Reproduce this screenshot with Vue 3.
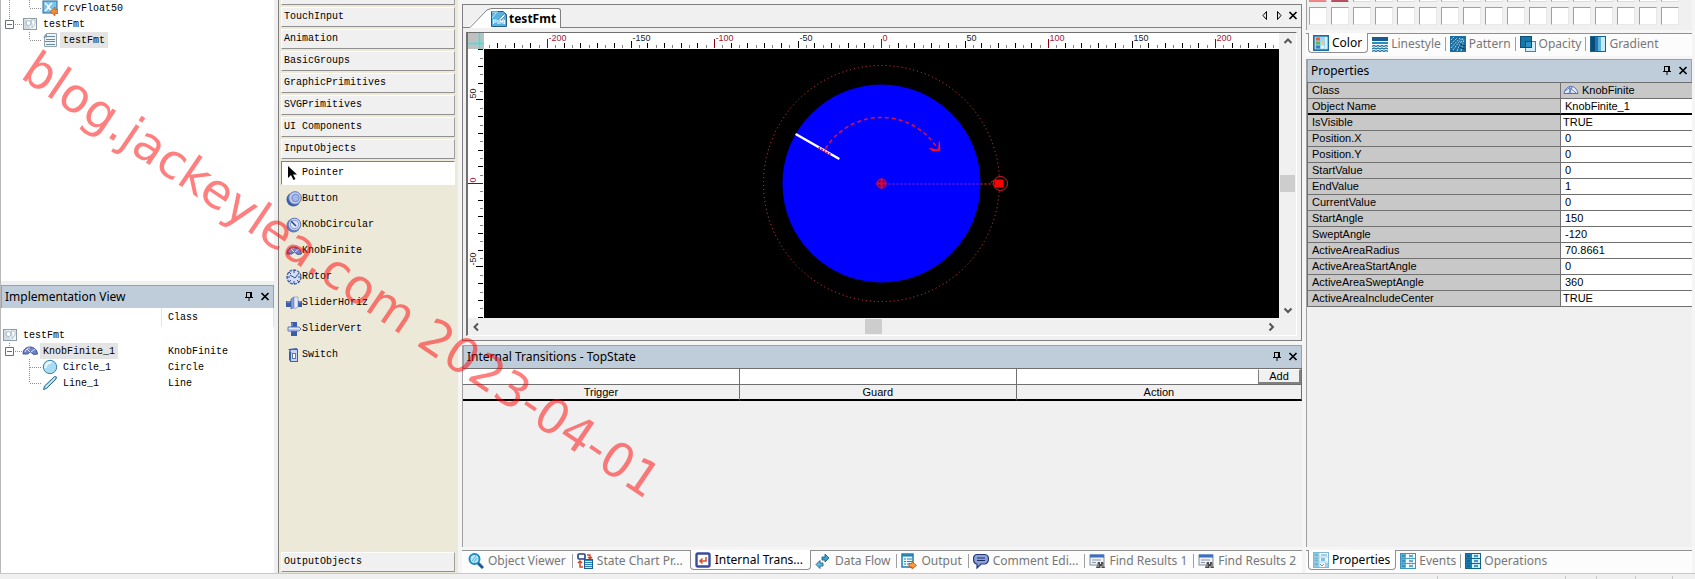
<script setup>
const icons = {
  rcv: '<rect x="1" y="1" width="14" height="12" fill="#7cc4ec" stroke="#2a6a96"/><path d="M3 3l4 4-4 4M10 3L6 7l4 4" fill="none" stroke="#fff" stroke-width="1.5"/><path d="M16 9.500h-3V7l-5 4.500 5 4.500v-2.500h3z" fill="#f08a3c" stroke="#b4481c" stroke-width=".6"/>',
  fmt: '<rect x="1.500" y="2.500" width="13" height="11" fill="#cfdce3" stroke="#8c9ca6"/><path d="M4 3h10v10H9z" fill="#f2f7fa"/><circle cx="6.500" cy="7" r="2.500" fill="#fff" stroke="#9fb4c2"/><path d="M9 4h4v4l-3 4V8z" fill="#fff" stroke="#9fb4c2" stroke-width=".8"/>',
  doc: '<path d="M4.500 1.500h10v13h-12V4z" fill="#eef5f9" stroke="#8fa2ae"/><path d="M5 4.500h8M4 7.500h9M3 9.500h10M4 12.500h9" stroke="#6b87a0" stroke-width="1"/><path d="M1 5.500h4V1.500z" fill="#7d97ab"/>',
  knobf: '<path d="M1 11c0-5 3.500-7 7-7s7 2 7.500 7l-4 .500-3-2.500-3 2z" fill="#6f83c8" stroke="#33478f" stroke-width=".9"/><path d="M3 9c1-3 3-4 5-4M8 9L5 6M9 9l4-3" stroke="#dfe6fa" fill="none"/>',
  knoblite: '<path d="M1 11.500c1-5 4-7 7-7s6 2 7 7z" fill="#e4e9f6" stroke="#5470b8"/><path d="M6 5l7 6M2 9l4-3 2 5M9 5l-3 6" stroke="#5470b8" fill="none" stroke-width=".9"/>',
  circle: '<circle cx="8" cy="8" r="6.700" fill="#a9dcf2" stroke="#3a83ad"/><path d="M3.500 9a5 5 0 0 1 6-5.500" fill="none" stroke="#e6f7fe" stroke-width="2.500"/>',
  line: '<path d="M1.500 14.500l1-3.500L12.500 1.500l2 .500-.500 2L4.500 13.500z" fill="#8fd0ee" stroke="#2b6f9c"/><path d="M4 12l9-9" stroke="#e2f5fd"/>',
  pointer: '<path d="M2 1v12l3-3 2.500 5 2-1L7 9.500h4z" fill="#000"/>',
  button: '<circle cx="7.500" cy="8.500" r="7" fill="#3f5fa8"/><circle cx="9" cy="7" r="6.300" fill="#c3cff0" stroke="#5874bc"/><circle cx="9.500" cy="7" r="3.700" fill="#a6b6e6" stroke="#7188cc"/>',
  knobc: '<circle cx="7.500" cy="8.500" r="7" fill="#5f7cc0"/><circle cx="8.500" cy="7.500" r="6.300" fill="#c9d6f3" stroke="#5874bc"/><circle cx="8.500" cy="7.500" r="4.200" fill="#dbe4f7" stroke="#8298d0"/><path d="M5 4l5 5" stroke="#2c4688" stroke-width="1.500"/>',
  rotor: '<circle cx="8" cy="8" r="7" fill="#d4def5" stroke="#3f5fa8" stroke-width="1.300" stroke-dasharray="3 1"/><path d="M8 1v3M8 12v3M1 8h3M12 8h3M3 3l2 2M11 11l2 2M3 13l2-2M4 6l5 3 4-5" stroke="#2f4c96" fill="none"/>',
  sliderh: '<rect x="0" y="6" width="16" height="6" fill="#3c5ca8"/><path d="M5 4l3-2v10l-3 2z" fill="#8ea4dc" stroke="#3c5ca8" stroke-width=".7"/><path d="M8 2h4v10l-4 2z" fill="#e4ebfa" stroke="#7f94cc" stroke-width=".7"/><path d="M1 7h3M13 7h2" stroke="#9db2e6"/>',
  sliderv: '<path d="M5 1h6v14H5z" fill="#3c5ca8"/><path d="M2 6h11l2 2-2 2H2z" fill="#dfe7f8" stroke="#5b76bc"/><path d="M2 9h11" stroke="#8da4dc"/><path d="M6 2v3" stroke="#9db2e6"/>',
  switch: '<path d="M3 2l8-1v13l-6 1-2-2z" fill="#3c5ca8"/><rect x="4.500" y="2.500" width="7" height="12" fill="#c6d3f2" stroke="#3f5fa8"/><rect x="6.500" y="6.500" width="3" height="5" fill="#fff" stroke="#5b76bc"/><path d="M2 2l4 4" stroke="#8ea4dc"/>',
  anim: '<path d="M.500.500H12l3.500 3V15.500H.500z" fill="#58b2e0" stroke="#1c5f8c"/><path d="M1 7l4-5M1 1h6" stroke="#c3e8f8"/><path d="M8 8l6-6v3l-4 4z" fill="#e8f7fd" stroke="#1c5f8c" stroke-width=".6"/><path d="M2.500 13V9H5v2H3M7 13V9M9 13V9l1.500 2L12 9v4M13.500 9v4" stroke="#e8f7fd" fill="none" stroke-width="1.100"/>',
  viewer: '<path d="M9 9l6 6" stroke="#1d5c94" stroke-width="3"/><circle cx="6.500" cy="6" r="5" fill="#bfe6f7" stroke="#1b8cc0" stroke-width="2"/><path d="M4 8l4-5M6 9l3-4" stroke="#4ab0da"/>',
  chart: '<rect x="1" y="1" width="7" height="5" rx="1" fill="#fff" stroke="#243f86" stroke-width="1.600"/><path d="M10 2h3v3M11 4l2 2 2-2M3 8v6h3M1 10l2-2 2 2" stroke="#d2492a" fill="none" stroke-width="1.500"/><rect x="7.500" y="6.500" width="8" height="9" fill="#2b84b8" stroke="#1c5f8c"/><path d="M8 8.500h7M8 10.500h7M8 12.500h7M8 14.500h7" stroke="#c6e9f8"/>',
  internal: '<rect x="1.500" y="1.500" width="13" height="13" rx="1.500" fill="#fff" stroke="#3b4c9c" stroke-width="2.400"/><path d="M11 5v4H6M7.500 6.500L5 9l2.500 2.500" fill="none" stroke="#d8502c" stroke-width="1.500"/>',
  flow: '<path d="M7 4h3V1l4 4-4 4V7H7z" fill="#34a4d4" stroke="#14557c" stroke-width=".8"/><path d="M8 10H5V7.500L1 11.500l4 4V13h3z" fill="#58bfe4" stroke="#14557c" stroke-width=".8"/>',
  output: '<rect x="1" y="1" width="11" height="13" fill="#e6f6fc" stroke="#1b7fae" stroke-width="1.500"/><path d="M1 2.500h11" stroke="#1b7fae" stroke-width="2"/><path d="M3 6h2M6 6h5M3 8.500h2M6 8.500h5M3 11h2M6 11h3" stroke="#2b84b8" stroke-width="1.200"/><path d="M8 10.500h3V8.500l4.500 4-4.500 3.500v-2H8z" fill="#f6a03c" stroke="#c4481c" stroke-width=".8"/>',
  comment: '<path d="M4 1.500h8c2 0 3.500 2 3.500 4.500S14 11 12 11H8l-4 4v-4C2 11 .500 9 .500 6S2 1.500 4 1.500z" fill="#8ca0dc" stroke="#243878" stroke-width="1.200"/><path d="M4 5h8M4 7.500h8" stroke="#1c2c62" stroke-width="1.200"/>',
  find: '<rect x="1" y="2" width="14" height="10" fill="#eef2f6" stroke="#7f8c9c"/><rect x="1" y="1.500" width="14" height="3" fill="#3a6fc4"/><path d="M3 7h9M3 9.500h4" stroke="#8a98a8"/><path d="M7 15l2-6h2v2h1V9h2l2 6h-3.500v-2h-1v2z" fill="#4a4a4a"/><path d="M9 11v3M14 11v3" stroke="#bbb"/>',
  color: '<rect x=".800" y=".800" width="14.400" height="14.400" fill="#9fd6ef" stroke="#1c6c9c" stroke-width="1.600"/><rect x="3" y="2.500" width="4" height="3" fill="#ee5a3c"/><rect x="3" y="6.500" width="4" height="3" fill="#5cb85c"/><rect x="3" y="10.500" width="4" height="3" fill="#3c78c8"/><rect x="8" y="6.500" width="3" height="3" fill="#f4d060"/><rect x="8" y="10.500" width="3" height="3" fill="#e8f6fc"/><rect x="12" y="2" width="2.500" height="12" fill="#d6f0fa"/>',
  linestyle: '<rect y="1" width="16" height="4" fill="#155d8c"/><path d="M0 7h16" stroke="#2b8cbe" stroke-width="2"/><path d="M0 10.500l2-1 2 1 2-1 2 1 2-1 2 1 2-1 2 1M0 13l2-1 2 1 2-1 2 1 2-1 2 1 2-1 2 1M0 15.500l2-1 2 1 2-1 2 1 2-1 2 1 2-1 2 1" stroke="#1b6ea2" fill="none" stroke-width="1.200"/>',
  pattern: '<rect width="16" height="16" fill="#1b6ea2"/><path d="M1 8l6-6M1 12L10 2M3 14l9-12M7 15l6-13M11 15l3-12M1 4l3-3" stroke="#a9dcf2" stroke-dasharray="2 1" fill="none"/><path d="M10 8l5 2M9 11l6 2" stroke="#0c3c60"/>',
  opacity: '<rect x=".500" y=".500" width="11" height="11" fill="#1676a8" stroke="#0e4f78"/><rect x="5.500" y="5.500" width="10" height="10" fill="#d4eef9" stroke="#2b8cbe"/><rect x="5.500" y="5.500" width="6" height="6" fill="#2a93c4" stroke="#0e4f78"/>',
  gradient: '<rect x=".500" y=".500" width="15" height="15" fill="#2b8cbe" stroke="#16608e"/><rect x="1" y="1" width="4" height="14" fill="#0c4a78"/><rect x="5" y="1" width="3" height="14" fill="#1d7ab0"/><rect x="8" y="1" width="3" height="14" fill="#5cb4dc"/><rect x="11" y="1" width="4" height="14" fill="#c8ebf8"/>',
  props: '<rect x=".500" y=".500" width="15" height="15" fill="#f2fafe" stroke="#7fb8d6"/><rect x="1" y="1" width="5" height="14" fill="#8cc8e6"/><path d="M2 3h3M2 6h3M2 9h3M2 12h3" stroke="#5a9fc4"/><path d="M1 5h14M1 10h14M6 1v14" stroke="#a5d2e8"/><path d="M8 3h6" stroke="#5a9fc4"/><rect x="8" y="6" width="4" height="3" fill="#7fbfe0"/><path d="M7 12l2 2 2-2M12 12h3M12 14h3" stroke="#5a9fc4" fill="none"/>',
  events: '<rect x=".500" y=".500" width="15" height="15" fill="#eef8fd" stroke="#3d93bf"/><rect x="1" y="1" width="5" height="14" fill="#5eb2dc"/><path d="M2 3h3M2 8h3M2 13h3" stroke="#1f6e9c"/><path d="M1 5.500h14M1 10.500h14" stroke="#4a9cc6"/><path d="M9 2l4 2M13 2l-4 2M9 7l4 2M13 7l-4 2M9 12l4 2M13 12l-4 2" stroke="#3d93bf"/>',
  ops: '<rect x=".500" y=".500" width="15" height="15" fill="#d8f0fa" stroke="#14638f"/><rect x="1" y="1" width="6" height="14" fill="#1a80b4"/><path d="M2 3h3M2 8h3M2 13h3" stroke="#0c456c"/><path d="M1 5.500h14M1 10.500h14" stroke="#14638f"/><path d="M9 2l4 2M13 2l-4 2M9 7l4 2M13 7l-4 2M9 12l4 2M13 12l-4 2" stroke="#1a80b4"/>',
  pin: '<path d="M5 3.500h6M5.500 3v6M9.500 3v6M10.500 3v6M4 8.500h8M8 9v3" stroke="#000" fill="none"/>',
  close: '<path d="M4.500 4l7 7M11.500 4l-7 7" stroke="#000" stroke-width="1.700"/>',
  prev: '<path d="M9.500 3.500v8L6 7.500z" fill="none" stroke="#000"/>',
  next: '<path d="M6.500 3.500v8L10 7.500z" fill="none" stroke="#000"/>',
  up: '<path d="M4.500 10L8 6.500 11.500 10" fill="none" stroke="#555" stroke-width="2"/>',
  down: '<path d="M4.500 6.500L8 10l3.500-3.500" fill="none" stroke="#555" stroke-width="2"/>',
  left: '<path d="M10 4.500L6.500 8l3.500 3.500" fill="none" stroke="#555" stroke-width="2"/>',
  right: '<path d="M6.500 4.500L10 8l-3.500 3.500" fill="none" stroke="#555" stroke-width="2"/>',
}

const guides = {
  root: { w: 1, d: '' },
  parent: { w: 21, d: 'M14 8.500h7M8.500 0v4', box: true },
  middle: { w: 41, d: 'M28.500 0v16M29 8.500h12' },
  last: { w: 41, d: 'M28.500 0v8M29 8.500h12' },
  lastOpen: { w: 41, d: 'M8.500 0v16M28.500 0v8M29 8.500h12' },
}

const project = [
  { guide: 'lastOpen', icon: 'rcv', name: 'rcvFloat50' },
  { guide: 'parent', icon: 'fmt', name: 'testFmt' },
  { guide: 'last', icon: 'doc', name: 'testFmt', selected: true },
]
const objects = [
  { guide: 'root', icon: 'fmt', name: 'testFmt', cls: '' },
  { guide: 'parent', icon: 'knobf', name: 'KnobFinite_1', cls: 'KnobFinite', selected: true },
  { guide: 'middle', icon: 'circle', name: 'Circle_1', cls: 'Circle' },
  { guide: 'last', icon: 'line', name: 'Line_1', cls: 'Line' },
]

const groups = ['TouchInput', 'Animation', 'BasicGroups', 'GraphicPrimitives', 'SVGPrimitives', 'UI Components', 'InputObjects']
const tools = [
  ['pointer', 'Pointer'], ['button', 'Button'], ['knobc', 'KnobCircular'], ['knobf', 'KnobFinite'],
  ['rotor', 'Rotor'], ['sliderh', 'SliderHoriz'], ['sliderv', 'SliderVert'], ['switch', 'Switch'],
]

const bottomTabs = [
  ['viewer', 'Object Viewer'], ['chart', 'State Chart Pr...'], ['internal', 'Internal Trans...'], ['flow', 'Data Flow'],
  ['output', 'Output'], ['comment', 'Comment Edi...'], ['find', 'Find Results 1'], ['find', 'Find Results 2'],
]
const styleTabs = [['color', 'Color'], ['linestyle', 'Linestyle'], ['pattern', 'Pattern'], ['opacity', 'Opacity'], ['gradient', 'Gradient']]
const propTabs = [['props', 'Properties'], ['events', 'Events'], ['ops', 'Operations']]

const properties = [
  ['IsVisible', 'TRUE'], ['Position.X', '0'], ['Position.Y', '0'], ['StartValue', '0'], ['EndValue', '1'],
  ['CurrentValue', '0'], ['StartAngle', '150'], ['SweptAngle', '-120'], ['ActiveAreaRadius', '70.8661'],
  ['ActiveAreaStartAngle', '0'], ['ActiveAreaSweptAngle', '360'], ['ActiveAreaIncludeCenter', 'TRUE'],
]

const SCALE = 1.67
function ticks(limit) {
  const out = []
  for (let v = -limit; v <= limit; v += 5) {
    const kind = v % 100 === 0 ? 'century' : v % 50 === 0 ? 'fifty' : v % 10 === 0 ? 'ten' : 'five'
    out.push({ v, pos: Math.round(v * SCALE), kind, len: { century: 9, fifty: 7, ten: 5, five: 3 }[kind] })
  }
  return out
}
const hTicks = ticks(235)
const vTicks = ticks(80)
</script>

<template>
  <div class="app">
    <main class="work">
      <section class="left">
        <ul class="project mono">
          <li v-for="row in project" :key="row.guide" class="node">
            <svg class="guide" :width="guides[row.guide].w" height="16">
              <path :d="guides[row.guide].d" class="dots" />
              <path v-if="guides[row.guide].box" d="M4.500 4.500h8v8h-8zM6 8.500h5" class="box" />
            </svg>
            <svg class="ic" viewBox="0 0 16 16" v-html="icons[row.icon]"></svg>
            <span class="label" :class="{ selected: row.selected }">{{ row.name }}</span>
          </li>
        </ul>
        <div class="impl">
          <header class="caption">
            <h2>Implementation View</h2>
            <button aria-label="Pin"><svg class="ic" viewBox="0 0 16 16" v-html="icons.pin"></svg></button>
            <button aria-label="Close"><svg class="ic" viewBox="0 0 16 16" v-html="icons.close"></svg></button>
          </header>
          <table class="objects mono">
            <thead><tr><th class="name-col"></th><th>Class</th></tr></thead>
            <tbody>
              <tr v-for="row in objects" :key="row.name">
                <td>
                  <div class="node">
                    <svg class="guide" :width="guides[row.guide].w" height="16">
                      <path :d="guides[row.guide].d" class="dots" />
                      <path v-if="guides[row.guide].box" d="M4.500 4.500h8v8h-8zM6 8.500h5" class="box" />
                    </svg>
                    <svg class="ic" viewBox="0 0 16 16" v-html="icons[row.icon]"></svg>
                    <span class="label" :class="{ selected: row.selected }">{{ row.name }}</span>
                  </div>
                </td>
                <td class="cls">{{ row.cls }}</td>
              </tr>
            </tbody>
          </table>
        </div>
      </section>

      <nav class="toolbox mono">
        <span class="group stub"></span>
        <button v-for="g in groups" :key="g" class="group">{{ g }}</button>
        <div class="tools">
          <button v-for="[icon, name] in tools" :key="name" class="tool" :class="{ active: name === 'Pointer' }">
            <svg class="ic" viewBox="0 0 16 16" v-html="icons[icon]"></svg>{{ name }}
          </button>
        </div>
        <button class="group">OutputObjects</button>
      </nav>

      <section class="center">
        <div class="editor">
          <div class="doc-bar">
            <svg class="slant" width="28" height="20"><path d="M0 20L20 2q2-1.500 8-1.500V20z" fill="#fff" /><path d="M0 19.500h3L20 2q2-1.500 8-1.500" fill="none" stroke="#808080" /></svg>
            <button class="doc-tab"><svg class="ic" viewBox="0 0 16 16" v-html="icons.anim"></svg>testFmt</button>
            <span class="spacer"></span>
            <button class="mini" aria-label="Previous"><svg class="ic" viewBox="0 0 16 16" v-html="icons.prev"></svg></button>
            <button class="mini" aria-label="Next"><svg class="ic" viewBox="0 0 16 16" v-html="icons.next"></svg></button>
            <button class="mini" aria-label="Close document"><svg class="ic" viewBox="0 0 16 16" v-html="icons.close"></svg></button>
          </div>
          <div class="view">
            <svg class="corner" viewBox="0 0 16 16"><path d="M11.500 0v16M0 10.500h16" stroke="#2ee" stroke-width="1.500" /></svg>
            <svg class="h-ruler">
              <svg x="50%" overflow="visible">
                <g v-for="t in hTicks" :key="t.v" :class="t.kind">
                  <line :x1="t.pos" :x2="t.pos" y1="15" :y2="15 - t.len" />
                  <text v-if="t.v % 50 === 0" :x="t.pos + 1" y="8">{{ t.v }}</text>
                </g>
              </svg>
            </svg>
            <svg class="v-ruler">
              <svg y="50%" overflow="visible">
                <g v-for="t in vTicks" :key="t.v" :class="t.kind">
                  <line x1="15" :x2="t.v === 0 ? 0 : 15 - t.len" :y1="-t.pos" :y2="-t.pos" />
                  <text v-if="t.v % 50 === 0" :x="t.pos + 1" y="8" transform="rotate(-90)">{{ t.v }}</text>
                </g>
              </svg>
            </svg>
            <svg class="canvas">
              <svg x="50%" y="50%" overflow="visible">
                <circle r="99" fill="#00f" />
                <circle r="118" fill="none" stroke="#f04040" stroke-dasharray="1 3" />
                <path d="M-56 -35A66 66 0 0 1 56 -35" fill="none" stroke="#e01040" stroke-width="1.500" stroke-dasharray="4 3" />
                <path d="M48 -35l9 2 1-9M50 -33h8v-6" fill="none" stroke="#f01030" stroke-width="1.300" />
                <path d="M-85 -49L-43 -25" stroke="#fff" stroke-width="2.500" stroke-linecap="round" />
                <path d="M-63 -36L-51 -29" stroke="#e02050" stroke-width="2" stroke-dasharray="2 1" />
                <path d="M7 .500H99" stroke="#6a18d0" stroke-width="1.500" stroke-dasharray="2 2" />
                <path d="M99 .500H115" stroke="#a02020" stroke-width="1.500" stroke-dasharray="2 2" />
                <circle r="4.500" fill="#2808d0" stroke="#f01020" />
                <path d="M0 -5V5M-5 0H5" stroke="#f00" stroke-width="2" />
                <circle cx="119" r="7" fill="#000" stroke="#e02020" />
                <path d="M109 -1l3-2v4" fill="none" stroke="#c02020" />
                <rect x="113" y="-4" width="9" height="8" fill="#f00" />
              </svg>
            </svg>
            <div class="v-scroll">
              <svg class="ic" viewBox="0 0 16 16" v-html="icons.up"></svg><i></i>
              <svg class="ic" viewBox="0 0 16 16" v-html="icons.down"></svg>
            </div>
            <div class="h-scroll">
              <svg class="ic" viewBox="0 0 16 16" v-html="icons.left"></svg><i></i>
              <svg class="ic" viewBox="0 0 16 16" v-html="icons.right"></svg>
            </div>
          </div>
        </div>

        <div class="transitions">
          <header class="caption">
            <h2>Internal Transitions - TopState</h2>
            <button aria-label="Pin"><svg class="ic" viewBox="0 0 16 16" v-html="icons.pin"></svg></button>
            <button aria-label="Close"><svg class="ic" viewBox="0 0 16 16" v-html="icons.close"></svg></button>
          </header>
          <table class="grid">
            <colgroup><col class="third" /><col class="third" /><col /></colgroup>
            <tbody>
              <tr class="entry">
                <td><input aria-label="Trigger" /></td>
                <td><input aria-label="Guard" /></td>
                <td><div class="with-add"><input aria-label="Action" /><button class="add">Add</button></div></td>
              </tr>
              <tr class="heads"><th>Trigger</th><th>Guard</th><th>Action</th></tr>
            </tbody>
          </table>
        </div>
        <div class="tabs wide-tabs" role="tablist">
          <button v-for="([icon, name], i) in bottomTabs" :key="name" role="tab" :class="{ on: i === 2, bare: i === 1 || i === 3 }">
            <svg class="ic" viewBox="0 0 16 16" v-html="icons[icon]"></svg><span>{{ name }}</span>
          </button>
        </div>
      </section>

      <section class="right">
        <div class="palette">
          <div class="swatches cut"><i v-for="n in 17" :key="n" :class="'s' + n"></i></div>
          <div class="swatches"><i v-for="n in 17" :key="n"></i></div>
        </div>
        <div class="tabs style-tabs" role="tablist">
          <button v-for="([icon, name], i) in styleTabs" :key="name" role="tab" :class="{ on: i === 0 }">
            <svg class="ic" viewBox="0 0 16 16" v-html="icons[icon]"></svg><span>{{ name }}</span>
          </button>
        </div>
        <div class="props">
          <header class="caption">
            <h2>Properties</h2>
            <button aria-label="Pin"><svg class="ic" viewBox="0 0 16 16" v-html="icons.pin"></svg></button>
            <button aria-label="Close"><svg class="ic" viewBox="0 0 16 16" v-html="icons.close"></svg></button>
          </header>
          <table class="prop-table">
            <tbody>
              <tr><th>Class</th><td class="class-cell"><div><svg class="ic" viewBox="0 0 16 16" v-html="icons.knoblite"></svg>KnobFinite</div></td></tr>
              <tr class="thick"><th>Object Name</th><td>KnobFinite_1</td></tr>
              <tr v-for="[name, value] in properties" :key="name"><th>{{ name }}</th><td :class="{ bool: value === 'TRUE' }">{{ value }}</td></tr>
            </tbody>
          </table>
        </div>
        <div class="tabs" role="tablist">
          <button v-for="([icon, name], i) in propTabs" :key="name" role="tab" :class="{ on: i === 0 }">
            <svg class="ic" viewBox="0 0 16 16" v-html="icons[icon]"></svg><span>{{ name }}</span>
          </button>
        </div>
      </section>
    </main>
    <footer class="status"><i class="c1"></i><i class="c2"></i><i class="c3"></i><i class="c4"></i><i class="c5"></i></footer>
    <div class="watermark">blog.jackeylea.com 2023-04-01</div>
  </div>
</template>

<style>
body { margin: 0; overflow: hidden; }
</style>

<style scoped>
* { box-sizing: border-box; }
.app { position: relative; display: flex; flex-direction: column; height: 100vh; overflow: hidden; background: #f5f5f5; color: #000; font: 12px/16px "Noto Sans", "Open Sans", sans-serif; }
button { margin: 0; padding: 0; border: 0; background: none; color: inherit; font: inherit; text-align: left; }
input { min-width: 0; width: 100%; height: 15px; padding: 0 4px; border: 0; background: #fff; font: inherit; display: block; outline: 0; }
table { border-collapse: separate; border-spacing: 0; width: 100%; }
th, td { padding: 0; font-weight: 400; text-align: left; }
.ic { width: 16px; height: 16px; flex: none; display: block; }
.mono { font: 10px/16px "Liberation Mono", monospace; }
.work { flex: 1; min-height: 0; display: flex; }

.left { flex: 0 0 278px; display: flex; flex-direction: column; padding-right: 4px; background: #f0f0f0; border-left: 1px solid #b8b8b8; }
.project { list-style: none; margin: 0; padding: 0; flex: 0 0 281px; background: #fff; }
.node { display: flex; align-items: center; height: 16px; }
.guide { flex: none; display: block; }
.dots { fill: none; stroke: #909090; stroke-dasharray: 1 1; }
.box { fill: #fff; stroke: #6a7078; }
.label { margin-left: 2px; padding: 1px 3px 0; line-height: 15px; }
.label.selected { background: #e4e4e4; }
.impl { flex: 1; margin-top: 4px; background: #fff; }
.caption { display: flex; align-items: center; height: 23px; padding: 0 0 0 3px; background: #bfcddb; border: 1px solid #a0a0a0; border-bottom: 0; }
.caption h2 { flex: 1; margin: 0; font-size: 12px; font-weight: 400; }
.objects th { height: 19px; padding: 1px 0 0 6px; border-right: 1px solid #e4e4e4; }
.objects .name-col { width: 161px; }
.objects .cls { padding: 1px 0 0 6px; line-height: 15px; }

.toolbox { flex: 0 0 180px; display: flex; flex-direction: column; gap: 2px; padding: 0 3px 1px 2px; background: #ece9d8; border-left: 1px solid #808080; }
.group { flex: none; height: 20px; padding-left: 2px; background: #f0f0f0; border: 1px solid #fff; border-right-color: #a0a0a0; border-bottom: 1px solid #909090; line-height: 18px; }
.group.stub { height: 5px; border-top: 0; }
.tools { flex: 1; display: flex; flex-direction: column; }
.tool { display: flex; align-items: center; height: 26px; padding-left: 4px; border: 1px solid transparent; }
.tool.active { height: 24px; margin-bottom: 1px; background: #fff; border-color: #808080 #fff #fff #808080; }

.center { flex: 1; min-width: 0; display: flex; flex-direction: column; margin: 4px 4px 0 4px; }
.editor { flex: 0 0 337px; display: flex; flex-direction: column; border: 1px solid #808080; background: #f0f0f0; }
.doc-bar { display: flex; align-items: flex-end; height: 23px; padding: 0 1px 0 4px; border-bottom: 1px solid #808080; }
.slant { flex: none; display: block; margin-bottom: -1px; }
.doc-tab { display: flex; align-items: center; gap: 2px; height: 20px; margin-bottom: -1px; margin-left: -4px; padding-right: 4px; background: #fff; border-top: 1px solid #808080; border-right: 1px solid #808080; border-top-right-radius: 3px; font-weight: 700; }
.spacer { flex: 1; }
.mini { align-self: center; width: 14px; display: flex; justify-content: center; }
.view { flex: 1; min-height: 0; display: grid; grid-template: 16px 1fr 17px / 16px 1fr 17px; margin: 4px 4px 4px 3px; border: 1px solid #707070; border-width: 1px 1px 1px 2px; border-right-color: #fff; border-bottom-color: #fff; background: #f0f0f0; }
.view > svg { display: block; width: 100%; height: 100%; overflow: hidden; min-width: 0; min-height: 0; }
.corner { background: #c0c0c0; }
.h-ruler { background: #fff; grid-column: 2; }
.v-ruler { background: #fff; grid-column: 1; grid-row: 2; }
.canvas { background: #000; grid-column: 2; grid-row: 2; }
line { stroke: #000; shape-rendering: crispEdges; }
.five line { stroke: #808080; }
.century line { stroke: #900018; }
text { font: 9px "Liberation Sans", sans-serif; fill: #222; }
.century text { fill: #a02038; }
.v-scroll { grid-column: 3; grid-row: 1 / 3; display: flex; flex-direction: column; justify-content: space-between; align-items: center; }
.v-scroll i { width: 15px; height: 17px; background: #cdcdcd; margin-top: 16px; }
.h-scroll { grid-column: 1 / 3; grid-row: 3; display: flex; justify-content: space-between; align-items: center; }
.h-scroll i { width: 17px; height: 15px; background: #cdcdcd; }

.transitions { flex: 1; min-height: 0; margin-top: 4px; margin-bottom: 3px; background: #f0f0f0; border-left: 1px solid #a0a0a0; }
.grid, .prop-table, .add { font: 11px/14px "Liberation Sans", sans-serif; }
.grid { table-layout: fixed; border-top: 1px solid #707070; }
.third { width: 33%; }
.grid td, .grid th { border-right: 1px solid #707070; }
.grid td { height: 16px; background: #fff; border-bottom: 1px solid #707070; }
.grid th { height: 16px; text-align: center; border-bottom: 2px solid #000; }
.with-add { display: flex; }
.add { flex: 0 0 43px; height: 15px; background: #f0f0f0; border: 1px solid #fff; border-right: 2px solid #808080; border-bottom: 2px solid #808080; border-left-color: #808080; text-align: center; line-height: 12px; }

.tabs { display: flex; flex: 0 0 22px; border-top: 1px solid #909090; background: #fcfcfc; padding: 0 0 3px 2px; color: #777; }
.tabs button { display: flex; align-items: center; gap: 3px; height: 19px; padding: 0 5px 0 4px; position: relative; white-space: nowrap; }
.tabs .on { margin-top: -1px; height: 20px; padding: 0 5px 0 4px; background: #fff; color: #000; border: 1px solid #909090; border-top: 0; border-radius: 0 0 4px 4px; }
.tabs button:not(.on):not(:last-child)::after { content: ""; position: absolute; right: 0; top: 3px; height: 14px; border-right: 1px solid #a0a0a0; }
.tabs .bare:nth-child(2)::after { display: none; }
.wide-tabs button { gap: 4px; padding: 0 7px 0 4px; }
.wide-tabs .on { padding: 0 7px 0 4px; }

.right { flex: 0 0 386px; display: flex; flex-direction: column; margin-right: 3px; }
.palette { height: 30px; background: #f0f0f0; border-left: 1px solid #a0a0a0; padding-left: 2px; }
.swatches { display: flex; gap: 4px; }
.swatches i { flex: 0 0 18px; height: 18px; background: #fff; border: 1px solid #a0a0a0; border-right-color: #e8e8e8; border-bottom-color: #e8e8e8; }
.swatches.cut { margin-bottom: 5px; }
.swatches.cut i { height: 2px; border-top: 0; border-bottom: 1px solid #ddd; }
.swatches.cut .s1 { background: #f08888; border-bottom-color: #e08888; }
.swatches.cut .s2 { background: #b85060; border-bottom-color: #b05060; }
.style-tabs { margin-top: 3px; flex-basis: 23px; }
.props { flex: 1; min-height: 0; margin: 3px 0; background: #f0f0f0; border-left: 1px solid #a0a0a0; }
.prop-table { table-layout: fixed; border-top: 1px solid #707070; border-left: 1px solid #707070; }
.prop-table th, .prop-table td { height: 16px; border-bottom: 1px solid #707070; line-height: 14px; vertical-align: top; }
.prop-table th { width: 253px; padding-left: 4px; background: #c8c8c8; border-right: 1px solid #707070; }
.prop-table td { padding-left: 4px; background: #fff; }
.prop-table td.bool { padding-left: 2px; }
.prop-table td.class-cell { padding-left: 2px; background: #c8c8c8; }
.class-cell div { display: flex; align-items: center; gap: 3px; height: 14px; }
.prop-table .thick th, .prop-table .thick td { border-bottom: 2px solid #000; }

.status { flex: 0 0 6px; display: flex; justify-content: flex-end; background: #f0f0f0; border-top: 1px solid #c8c8c8; padding-right: 22px; }
.status i { margin-top: 2px; border-left: 1px solid #c8c8c8; }
.c1 { width: 128px; }
.c2 { width: 31px; }
.c3 { width: 39px; }
.c4 { width: 37px; }
.c5 { width: 1px; }
.watermark { position: absolute; left: 19px; top: 36px; font: 48px/48px "DejaVu Sans", sans-serif; color: rgba(255, 0, 0, 0.5); white-space: nowrap; transform-origin: 0 41px; transform: rotate(34deg); pointer-events: none; }
</style>
